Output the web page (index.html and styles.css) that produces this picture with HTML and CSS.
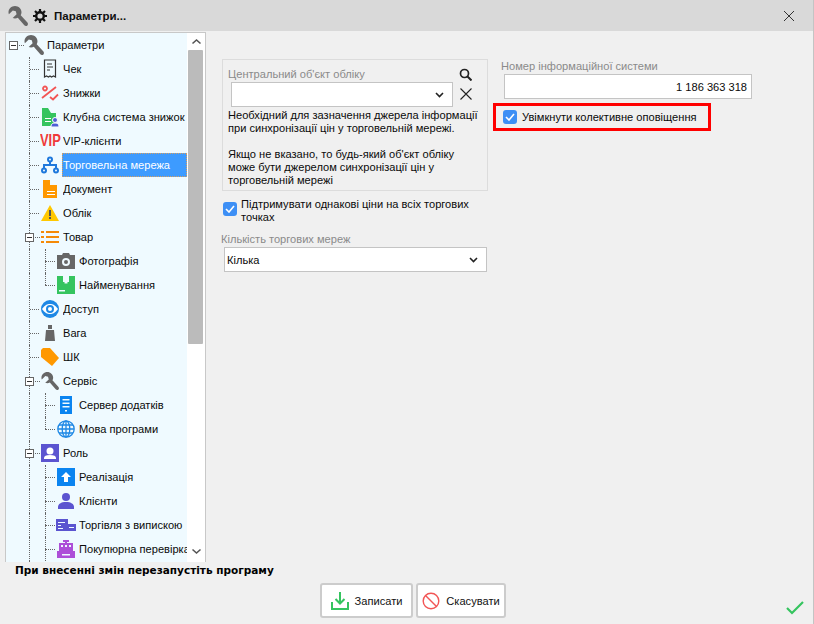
FILE: index.html
```html
<!DOCTYPE html>
<html lang="uk">
<head>
<meta charset="utf-8">
<title>Параметри</title>
<link rel="stylesheet" href="styles.css">
</head>
<body>
<svg class="defs" width="0" height="0">
  <symbol id="wrench" viewBox="0 0 20 20"><path fill="#666" d="M7 0C3.500 0 .5 2.800.5 6.300c0 .8.1 1.400.4 2L4.800 4.400l3 .8.800 3L4.700 12c.7.300 1.500.4 2.300.4 1.100 0 2-.3 2.800-.7l6.500 7.500c.9 1 2.300 1 3.100.2s.7-2.200-.2-3.100L12.700 9.300c.5-.9.800-1.900.8-3C13.500 2.800 10.500 0 7 0z"/></symbol>
  <symbol id="user" viewBox="0 0 18 18"><circle cx="9" cy="5" r="4"/><path d="M1 17v-2c0-3 3-5 8-5s8 2 8 5v2z"/></symbol>
</svg>
<div class="window">
  <header class="titlebar">
    <svg class="ic-title" width="20" height="20"><use href="#wrench"/></svg>
    <svg class="ic-gear" width="14" height="14" viewBox="0 0 14 14"><circle cx="7" cy="7" r="3.800" fill="none" stroke="#111" stroke-width="2.400"/><path stroke="#111" stroke-width="2.200" d="M7 0v3M7 11v3M0 7h3M11 7h3M2 2l2 2M10 10l2 2M12 2l-2 2M4 10l-2 2"/></svg>
    <span class="title-text">Параметри...</span>
    <svg class="close" width="12" height="12" viewBox="0 0 12 12"><path stroke="#333" fill="none" d="M1 1l10 10M11 1L1 11"/></svg>
  </header>
  <main class="main">
    <nav class="tree">
      <div class="tree-list">
        <div class="row root"><i class="exp"></i><svg class="ic" width="20" height="20"><use href="#wrench"/></svg><span class="lbl">Параметри</span></div>
        <div class="row l1"><svg class="ic" width="18" height="20" viewBox="0 0 18 20"><path fill="none" stroke="#333" stroke-width="1.200" d="M3.500 1h11v17l-2-1-2 1-1.500-1-1.500 1-2-1-2 1zM6 5h5M6 8h6M6 11h3"/></svg><span class="lbl">Чек</span></div>
        <div class="row l1"><svg class="ic" width="18" height="18" viewBox="0 0 18 18"><path fill="none" stroke="#f25555" stroke-width="1.800" d="M1 14L15 3M2 4.500a2 2 0 1 0 4 0a2 2 0 1 0-4 0M9 13l3 2.500 5-5"/></svg><span class="lbl">Знижки</span></div>
        <div class="row l1"><svg class="ic" width="18" height="20" viewBox="0 0 18 20"><path fill="#35c45f" d="M1 1h6l3 5h5v13H1z"/><path fill="#fff" d="M4 11h6v1H4zM4 14h6v1H4z"/><circle cx="14" cy="13" r="2.500" fill="#4c5fd5" stroke="#fff"/><path fill="#4c5fd5" stroke="#fff" d="M10 20v-1c0-2 2-3 4-3s4 1 4 3v1z"/></svg><span class="lbl">Клубна система знижок</span></div>
        <div class="row l1"><b class="vip">VIP</b><span class="lbl">VIP-клієнти</span></div>
        <div class="row l1"><svg class="ic" width="18" height="18" viewBox="0 0 18 18"><g fill="none" stroke="#1e78dc" stroke-width="2"><circle cx="9" cy="3.500" r="2"/><circle cx="3" cy="14.500" r="2"/><circle cx="15" cy="14.500" r="2"/><path d="M9 5.500V9M3 12V9h12v3"/></g></svg><span class="lbl sel">Торговельна мережа</span></div>
        <div class="row l1"><svg class="ic" width="18" height="20" viewBox="0 0 18 20"><path fill="#ff9800" d="M2 1h7v5h7v13H2z"/><path fill="#fff" d="M6 12h8v1H6zM6 15h8v1H6z"/></svg><span class="lbl">Документ</span></div>
        <div class="row l1"><svg class="ic" width="18" height="18" viewBox="0 0 18 18"><path fill="#ffc800" d="M9 1l9 16H0z"/><path fill="#555" d="M8 6h2v6H8zM8 13h2v2H8z"/></svg><span class="lbl">Облік</span></div>
        <div class="row l1 has"><i class="exp"></i><svg class="ic" width="18" height="18" viewBox="0 0 18 18"><path fill="#f58a07" d="M0 3h3v2H0zM5 3h13v2H5zM0 8h3v2H0zM5 8h13v2H5zM0 13h3v2H0zM5 13h13v2H5z"/></svg><span class="lbl">Товар</span></div>
        <div class="row l2 open"><svg class="ic" width="18" height="18" viewBox="0 0 18 18"><path fill="#666" fill-rule="evenodd" d="M0 3h5l1-2h6l1 2h5v14H0zM9 6a4 4 0 1 0 0 8a4 4 0 1 0 0-8zM9 8a2 2 0 1 1 0 4a2 2 0 1 1 0-4z"/></svg><span class="lbl">Фотографія</span></div>
        <div class="row l2 last"><svg class="ic" width="18" height="18" viewBox="0 0 18 18"><path fill="#35c45f" fill-rule="evenodd" d="M0 0h6v6h1.500V7.500h3V6H12V0h6v18H0zM2 14v1.500h6V14z"/></svg><span class="lbl">Найменування</span></div>
        <div class="row l1"><svg class="ic" width="18" height="18" viewBox="0 0 18 18"><circle cx="9" cy="9" r="9" fill="#1e88e5"/><path fill="#fff" d="M1 9c3-4 5-5 8-5s5 1 8 5c-3 4-5 5-8 5s-5-1-8-5z"/><circle cx="9" cy="9" r="4" fill="#1e88e5"/><circle cx="9" cy="9" r="2" fill="#fff"/></svg><span class="lbl">Доступ</span></div>
        <div class="row l1"><svg class="ic" width="18" height="18" viewBox="0 0 18 18"><path fill="#666" d="M7 1h4v4H7zM5 6h8l1 11H4z"/></svg><span class="lbl">Вага</span></div>
        <div class="row l1"><svg class="ic" width="18" height="18" viewBox="0 0 18 18"><path fill="#ff9800" d="M2 0h7l9 10-7 8-11-9V2z"/></svg><span class="lbl">ШК</span></div>
        <div class="row l1 has"><i class="exp"></i><svg class="ic" width="18" height="18"><use href="#wrench"/></svg><span class="lbl">Сервіс</span></div>
        <div class="row l2 open"><svg class="ic" width="18" height="18" viewBox="0 0 18 18"><path fill="#0a84f0" fill-rule="evenodd" d="M3 0h12v18H3zM5.500 3v1.500h7V3zM5.500 6.500V8h7V6.500zM5.500 10v1.500h7V10zM8 14v1.500h2V14z"/></svg><span class="lbl">Сервер додатків</span></div>
        <div class="row l2 last"><svg class="ic" width="18" height="18" viewBox="0 0 18 18"><g fill="none" stroke="#1e88e5" stroke-width="1.300"><circle cx="9" cy="9" r="8.200"/><ellipse cx="9" cy="9" rx="3.800" ry="8.200"/><path d="M9 1v16M1 9h16M2 5h14M2 13h14"/></g></svg><span class="lbl">Мова програми</span></div>
        <div class="row l1 has"><i class="exp"></i><svg class="ic" width="18" height="18" viewBox="0 0 18 18"><path fill="#5b54d0" d="M0 0h18v18H0z"/><circle cx="9" cy="7" r="3.500" fill="#fff"/><path fill="#fff" d="M3 15v-1c0-2 2-3 6-3s6 1 6 3v1z"/></svg><span class="lbl">Роль</span></div>
        <div class="row l2 open"><svg class="ic" width="18" height="18" viewBox="0 0 18 18"><path fill="#0a84f0" d="M0 0h18v18H0z"/><path fill="#fff" d="M9 4l5 5h-3v5H7V9H4z"/></svg><span class="lbl">Реалізація</span></div>
        <div class="row l2 open"><svg class="ic ic-violet" width="18" height="18"><use href="#user"/></svg><span class="lbl">Клієнти</span></div>
        <div class="row l2 open"><svg class="ic ic-wide" width="20" height="18" viewBox="0 0 20 18"><path fill="#5b54d0" fill-rule="evenodd" d="M0 3h12v5h8v7H0zM2 6v1h7V6zM2 9v1h3V9zM2 12v1h5v-1zM13 11v1h5v-1z"/></svg><span class="lbl">Торгівля з випискою</span></div>
        <div class="row l2 open"><svg class="ic" width="18" height="18" viewBox="0 0 18 18"><path fill="#ad4fd8" fill-rule="evenodd" d="M6 0h6v2H10v1h6v8h2v7H0v-7h2V3h6V2H6zM4 5v2h2V5zM8 5v2h2V5zM12 5v2h2V5zM5 14v1.500h8V14z"/></svg><span class="lbl">Покупюрна перевірка</span></div>
        <div class="row l1 tail"></div>
      </div>
      <div class="scrollbar">
        <svg class="sb-arrow" width="11" height="7" viewBox="0 0 11 7"><path fill="none" stroke="#555" stroke-width="1.600" d="M1.500 5.500l4-3.500 4 3.500"/></svg>
        <div class="sb-thumb"></div>
        <svg class="sb-arrow sb-down" width="11" height="7" viewBox="0 0 11 7"><path fill="none" stroke="#555" stroke-width="1.600" d="M1.500 1.500l4 3.500 4-3.500"/></svg>
      </div>
    </nav>
    <section class="col-left">
      <div class="group">
        <div class="group-top">
          <div class="group-field">
            <div class="cap cap-group">Центральний об'єкт обліку</div>
            <div class="select select-group"><svg class="chev" width="9" height="6" viewBox="0 0 9 6"><path fill="none" stroke="#222" stroke-width="1.600" d="M1 1l3.500 3.500L8 1"/></svg></div>
          </div>
          <div class="group-tools">
            <svg width="13" height="13" viewBox="0 0 13 13"><circle cx="5.500" cy="5.500" r="4" fill="none" stroke="#222" stroke-width="1.700"/><path stroke="#222" stroke-width="2" d="M8.500 8.500l4 4"/></svg>
            <svg width="12" height="12" viewBox="0 0 12 12"><path fill="none" stroke="#222" stroke-width="1.100" d="M.5.500l11 11M11.500.500l-11 11"/></svg>
          </div>
        </div>
        <p class="note">Необхідний для зазначення джерела інформації при синхронізації цін у торговельній мережі.</p>
        <p class="note note-2">Якщо не вказано, то будь-який об'єкт обліку може бути джерелом синхронізації цін у торговельній мережі</p>
      </div>
      <div class="check check-wrap">
        <span class="box"><svg width="10" height="8" viewBox="0 0 10 8"><path fill="none" stroke="#fff" stroke-width="1.600" d="M1 4l3 3 5-6"/></svg></span>
        <span class="check-text">Підтримувати однакові ціни на всіх торгових точках</span>
      </div>
      <div class="cap cap-count">Кількість торгових мереж</div>
      <div class="select select-count"><span>Кілька</span><svg class="chev" width="9" height="6" viewBox="0 0 9 6"><path fill="none" stroke="#222" stroke-width="1.600" d="M1 1l3.500 3.500L8 1"/></svg></div>
    </section>
    <section class="col-right">
      <div class="cap cap-num">Номер інформаційної системи</div>
      <div class="num">1 186 363 318</div>
      <div class="check check-red">
        <span class="box"><svg width="10" height="8" viewBox="0 0 10 8"><path fill="none" stroke="#fff" stroke-width="1.600" d="M1 4l3 3 5-6"/></svg></span>
        <span>Увімкнути колективне оповіщення</span>
      </div>
    </section>
  </main>
  <div class="hint">При внесенні змін перезапустіть програму</div>
  <footer class="footer">
    <button class="btn btn-save"><svg width="18" height="18" viewBox="0 0 18 18"><path fill="none" stroke="#35c45f" stroke-width="2" d="M1 10v7h16v-7M9 0v11M4.500 7L9 11.500 13.500 7"/></svg><span>Записати</span></button>
    <button class="btn btn-cancel"><svg width="18" height="18" viewBox="0 0 18 18"><circle cx="9" cy="9" r="7.800" fill="none" stroke="#f25555" stroke-width="1.400"/><path stroke="#f25555" stroke-width="1.400" d="M3.500 3.500l11 11"/></svg><span>Скасувати</span></button>
    <svg class="ok" width="18" height="14" viewBox="0 0 18 14"><path fill="none" stroke="#35c45f" stroke-width="2.200" d="M1 7l5 5L17 1"/></svg>
  </footer>
</div>
</body>
</html>
```
FILE: styles.css
```css
* { box-sizing: border-box; }
html, body { margin: 0; padding: 0; }
body { width: 814px; height: 624px; overflow: hidden; background: #f0f0f0; font-family: "Liberation Sans", sans-serif; font-size: 11.1px; color: #0a0a0a; }
.defs { display: block; height: 0; }
.window { width: 814px; height: 624px; display: flex; flex-direction: column; border-right: 1px solid #c4c4c4; }
.titlebar { height: 31px; flex: none; background: #d9d9d9; display: flex; align-items: center; padding-left: 8px; }
.ic-title { flex: none; }
.ic-gear { margin-left: 5px; flex: none; }
.title-text { margin-left: 7px; font-weight: 700; font-size: 11.5px; color: #111; }
.close { margin-left: auto; margin-right: 18px; }
.main { height: 531px; flex: none; display: flex; }
.tree { margin: 1px 0 0 5px; width: 201px; height: 530px; flex: none; display: flex; border: 1px solid #c8c8c8; border-bottom: 0; background: #fff; }
.tree-list { width: 181px; flex: none; height: 100%; overflow: hidden; background: #effaff; }
.row { height: 24px; display: flex; align-items: center; position: relative; white-space: nowrap; }
.row.root { padding-left: 18px; }
.row.l1 { padding-left: 35px; }
.row.l2 { padding-left: 51px; }
.row.root .lbl { margin-left: 3px; }
.row .ic { flex: none; }
.ic-violet { fill: #5b54d0; }
.ic-wide { margin-left: -1px; margin-right: -1px; }
.lbl { margin-left: 4px; line-height: 24px; flex: 1; min-width: 0; overflow: hidden; }
.sel { background: #3d9bff; color: #fff; height: 24px; margin-left: 3px; padding-left: 1px; outline: 1px dotted #d8a060; outline-offset: -1px; }
.vip { width: 18px; flex: none; margin-left: -1px; margin-right: 1px; color: #f03a3a; font: 700 17px/24px "Liberation Sans", sans-serif; transform: scaleX(.76); transform-origin: left center; }
.exp { position: absolute; width: 9px; height: 9px; border: 1px solid #666; background: #fff; top: 8px; left: 3px; z-index: 1; }
.exp::after { content: ""; position: absolute; left: 1px; right: 1px; top: 3px; height: 1px; background: #333; }
.row.has .exp { left: 19px; }
.row.root::after { content: ""; position: absolute; left: 13px; width: 5px; top: 12px; border-top: 1px dotted #666; }
.row.l1::before { content: ""; position: absolute; left: 23px; top: 0; bottom: 0; border-left: 1px dotted #666; }
.row.l1::after { content: ""; position: absolute; left: 24px; width: 9px; top: 12px; border-top: 1px dotted #666; }
.row.has::after { left: 29px; width: 5px; }
.row.tail::after { display: none; }
.row.l2::before { content: ""; position: absolute; left: 23px; top: 0; bottom: 0; border-left: 1px dotted #666; }
.row.l2::after { content: ""; position: absolute; left: 39px; width: 10px; top: 12px; height: 0; border-top: 1px dotted #666; }
.row.l2 .lbl::before { content: ""; position: absolute; left: 39px; top: 0; bottom: 0; border-left: 1px dotted #666; }
.row.l2.last .lbl::before { bottom: 12px; }
.scrollbar { width: 18px; flex: none; margin-left: 1px; display: flex; flex-direction: column; align-items: flex-start; padding-top: 5px; }
.sb-arrow { margin-left: 3px; }
.sb-thumb { width: 15px; height: 294px; background: #bbb; margin-top: 5px; border-radius: 1px; }
.sb-down { margin-top: auto; margin-bottom: 7px; }
.col-left { width: 266px; margin-left: 15px; padding-top: 28px; flex: none; }
.group { width: 266px; margin-left: 1px; height: 132px; border: 1px solid #dcdcdc; padding: 7px 0 0 5px; }
.group-top { display: flex; }
.group-field { width: 225px; }
.cap { color: #8a8a8a; line-height: 14px; }
.select { background: #fff; border: 1px solid #c4c4c4; display: flex; align-items: center; justify-content: space-between; }
.select-group { margin: 1px 0 0 3px; width: 222px; height: 25px; justify-content: flex-end; padding-right: 8px; }
.group-tools { display: flex; flex-direction: column; align-items: center; gap: 7px; margin-left: 6px; padding-top: 1px; }
.note { margin: 2px 0 0; line-height: 13px; width: 258px; }
.note-2 { margin-top: 13px; width: 230px; }
.check { display: flex; gap: 4px; line-height: 13px; }
.box { width: 14px; height: 14px; flex: none; border-radius: 3px; background: #3d8ff5; display: flex; align-items: center; justify-content: center; }
.check-wrap { margin: 11px 0 0 2px; width: 258px; }
.check-text { margin-top: -4px; }
.cap-count { margin-top: 8px; }
.select-count { width: 263px; height: 25px; margin: 1px 0 0 3px; padding: 0 8px 0 2px; }
.col-right { width: 260px; margin-left: 14px; padding-top: 28px; flex: none; }
.num { margin: 1px 0 0 3px; width: 248px; height: 25px; background: #fff; border: 1px solid #c4c4c4; text-align: right; line-height: 24px; padding-right: 4px; }
.check-red { margin: 4px 0 0 -8px; width: 218px; height: 28px; border: 3px solid #f00; align-items: center; padding-left: 7px; gap: 5px; }
.hint { height: 21px; flex: none; padding-left: 15px; font: 700 10.500px/16px "DejaVu Sans", sans-serif; color: #000; }
.footer { flex: 1; display: flex; align-items: flex-start; padding-left: 320px; position: relative; }
.btn { height: 35px; background: #fff; border: 2px solid #ccc; border-radius: 3px; font: inherit; color: #111; display: flex; align-items: center; justify-content: center; gap: 6px; padding: 0; }
.btn-save { width: 93px; }
.btn-cancel { width: 90px; margin-left: 3px; }
.ok { position: absolute; left: 786px; top: 18px; }
```
